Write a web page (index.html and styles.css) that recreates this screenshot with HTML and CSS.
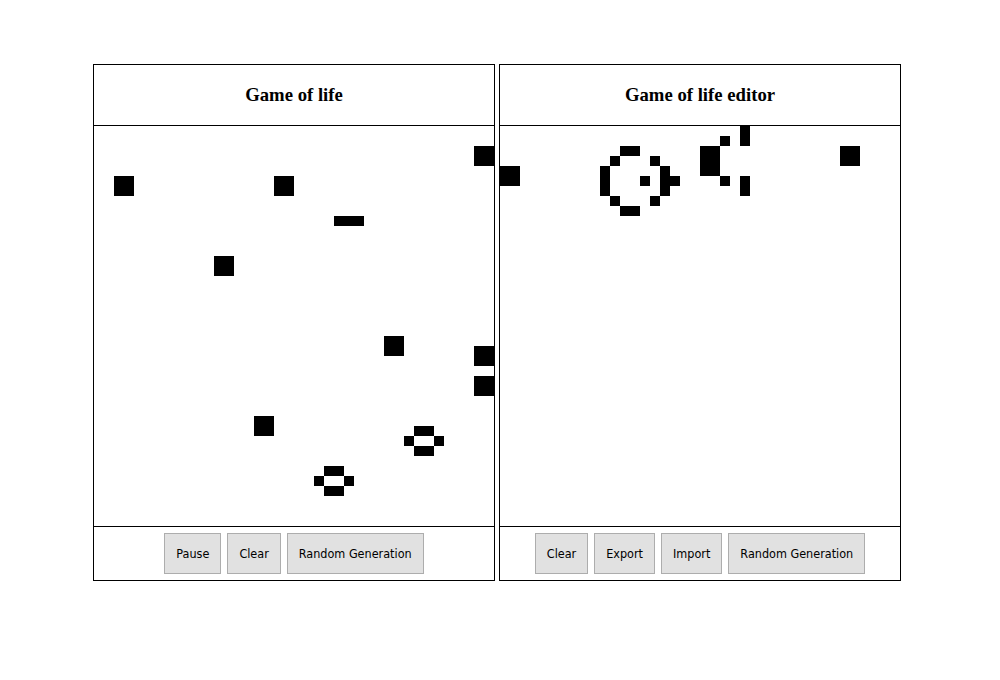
FILE: index.html
```html
<!DOCTYPE html>
<html>
<head>
<meta charset="utf-8">
<title>Game of life</title>
<link rel="stylesheet" href="styles.css">
</head>
<body>
<div class="app">
  <section class="panel">
    <header class="panel-head"><h3 class="title">Game of life</h3></header>
    <svg class="board" viewBox="0 0 40 40" width="400" height="400" shape-rendering="crispEdges">
      <rect x="38" y="2" width="2" height="2"/>
      <rect x="2" y="5" width="2" height="2"/>
      <rect x="18" y="5" width="2" height="2"/>
      <rect x="24" y="9" width="3" height="1"/>
      <rect x="12" y="13" width="2" height="2"/>
      <rect x="29" y="21" width="2" height="2"/>
      <rect x="38" y="22" width="2" height="2"/>
      <rect x="38" y="25" width="2" height="2"/>
      <rect x="16" y="29" width="2" height="2"/>
      <rect x="32" y="30" width="2" height="1"/>
      <rect x="31" y="31" width="1" height="1"/>
      <rect x="34" y="31" width="1" height="1"/>
      <rect x="32" y="32" width="2" height="1"/>
      <rect x="23" y="34" width="2" height="1"/>
      <rect x="22" y="35" width="1" height="1"/>
      <rect x="25" y="35" width="1" height="1"/>
      <rect x="23" y="36" width="2" height="1"/>
    </svg>
    <footer class="panel-foot">
      <button class="btn">Pause</button>
      <button class="btn">Clear</button>
      <button class="btn">Random Generation</button>
    </footer>
  </section>
  <section class="panel">
    <header class="panel-head"><h3 class="title">Game of life editor</h3></header>
    <svg class="board" viewBox="0 0 40 40" width="400" height="400" shape-rendering="crispEdges">
      <rect x="0" y="4" width="2" height="2"/>
      <rect x="12" y="2" width="2" height="1"/>
      <rect x="11" y="3" width="1" height="1"/>
      <rect x="15" y="3" width="1" height="1"/>
      <rect x="10" y="4" width="1" height="3"/>
      <rect x="16" y="4" width="1" height="3"/>
      <rect x="14" y="5" width="1" height="1"/>
      <rect x="17" y="5" width="1" height="1"/>
      <rect x="11" y="7" width="1" height="1"/>
      <rect x="15" y="7" width="1" height="1"/>
      <rect x="12" y="8" width="2" height="1"/>
      <rect x="20" y="2" width="2" height="3"/>
      <rect x="22" y="1" width="1" height="1"/>
      <rect x="22" y="5" width="1" height="1"/>
      <rect x="24" y="0" width="1" height="2"/>
      <rect x="24" y="5" width="1" height="2"/>
      <rect x="34" y="2" width="2" height="2"/>
    </svg>
    <footer class="panel-foot">
      <button class="btn">Clear</button>
      <button class="btn">Export</button>
      <button class="btn">Import</button>
      <button class="btn">Random Generation</button>
    </footer>
  </section>
</div>
</body>
</html>
```
FILE: styles.css
```css
html, body {
  margin: 0;
  padding: 0;
  background: #fff;
}
body {
  font-family: "Liberation Serif", serif;
}
.app {
  display: flex;
  align-items: flex-start;
  gap: 4px;
  padding: 64px 0 0 93px;
}
.panel {
  width: 400px;
  border: 1px solid #000;
  display: flex;
  flex-direction: column;
}
.panel-head {
  height: 60px;
  border-bottom: 1px solid #000;
  display: flex;
  align-items: center;
  justify-content: center;
}
.title {
  margin: 0;
  font-family: "Liberation Serif", serif;
  font-weight: bold;
  font-size: 18.72px;
  color: #000;
}
.board {
  display: block;
  width: 400px;
  height: 400px;
  border-bottom: 1px solid #000;
  fill: #000;
}
.panel-foot {
  height: 53px;
  box-sizing: border-box;
  padding: 6px 0;
  display: flex;
  justify-content: center;
  gap: 6px;
}
.btn {
  height: 41px;
  margin: 0;
  padding: 0 11px;
  background: #e1e1e1;
  border: 1px solid #adadad;
  border-radius: 0;
  font-family: "DejaVu Sans Condensed", "DejaVu Sans", sans-serif;
  font-size: 12.5px;
  color: #000;
}
```
